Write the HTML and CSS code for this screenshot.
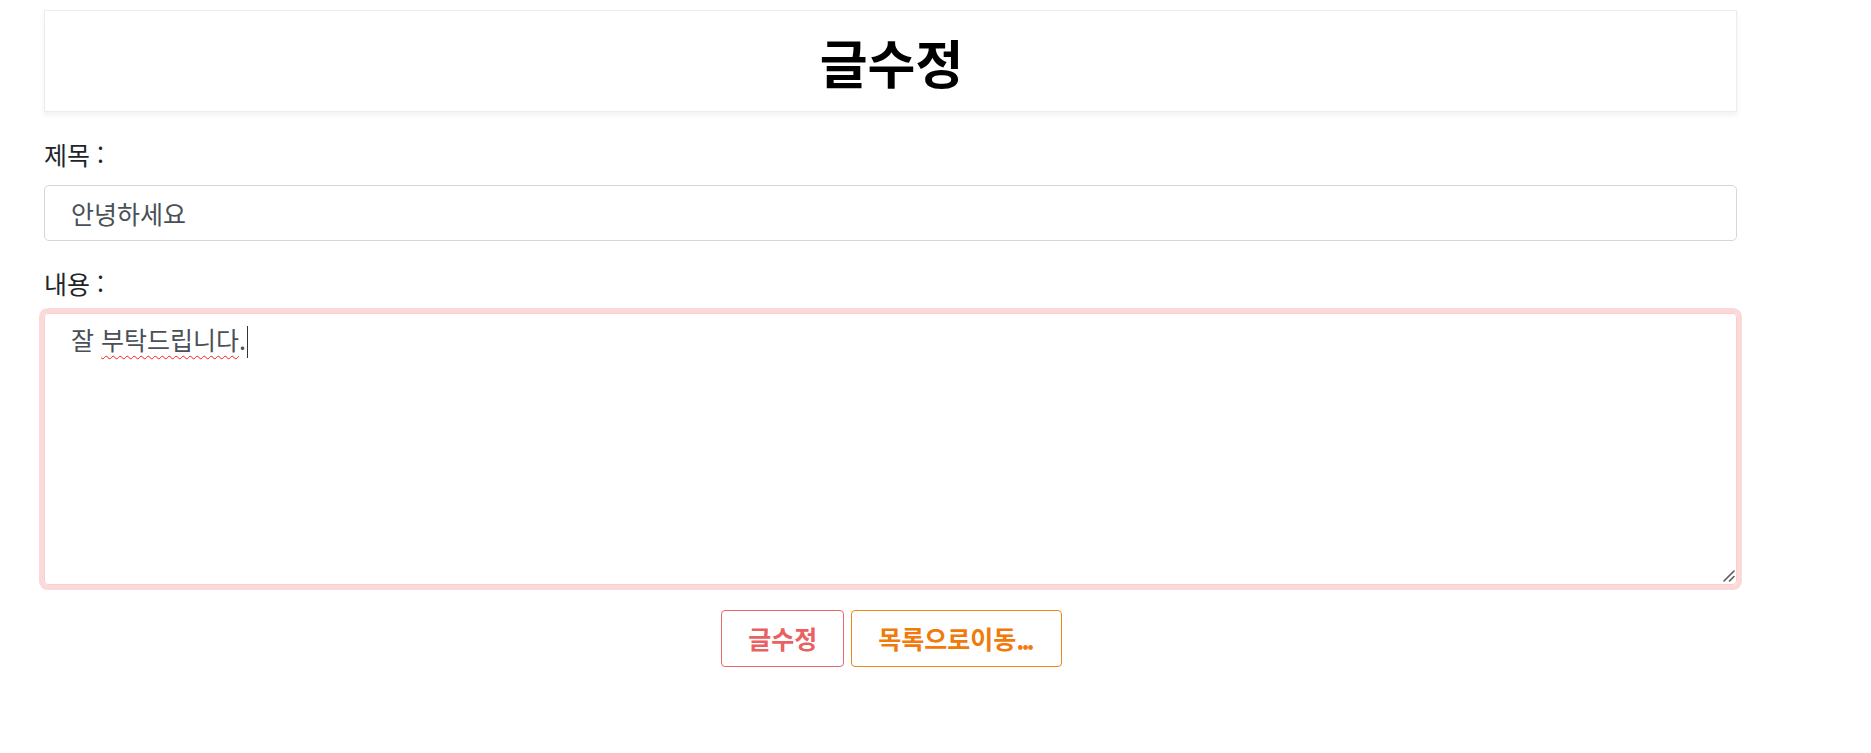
FILE: index.html
```html
<!DOCTYPE html>
<html lang="ko">
<head>
<meta charset="utf-8">
<title>글수정</title>
<link rel="stylesheet" href="styles.css">
</head>
<body>
<div class="page">
  <header class="title-card">
    <h1 class="title">글수정</h1>
  </header>
  <form class="edit-form">
    <label class="field-label">제목 :</label>
    <div class="text-input">안녕하세요</div>
    <label class="field-label">내용 :</label>
    <div class="text-area">
      <div class="text-area-content">잘 <span class="misspelled">부탁드립니다</span>.<span class="caret"></span></div>
      <svg class="grip" width="14" height="14" viewBox="0 0 14 14" aria-hidden="true">
        <line x1="13" y1="2" x2="3" y2="12" stroke="#5a5a5a" stroke-width="1.6" stroke-linecap="round"/>
        <line x1="13" y1="7.5" x2="8.5" y2="12" stroke="#5a5a5a" stroke-width="1.6" stroke-linecap="round"/>
      </svg>
    </div>
    <div class="actions">
      <button type="button" class="btn btn-edit">글수정</button>
      <button type="button" class="btn btn-list">목록으로이동<span class="dots">...</span></button>
    </div>
  </form>
</div>
</body>
</html>
```

FILE: styles.css
```css
html, body {
  margin: 0;
  padding: 0;
  background: #ffffff;
}

body {
  font-family: "Noto Sans CJK KR", "Noto Sans", sans-serif;
  color: #212529;
}

.page {
  width: 1693px;
  margin-left: 44px;
  padding-top: 10px;
}

.title-card {
  box-sizing: border-box;
  height: 102px;
  border: 1px solid #ececec;
  box-shadow: 0 3px 5px rgba(0, 0, 0, 0.06);
  background: #fff;
  display: flex;
  align-items: center;
  justify-content: center;
}

.title {
  margin: 0;
  font-size: 52px;
  font-weight: 700;
  line-height: 1;
  color: #000;
  padding-left: 2px;
  padding-top: 2px;
}

.edit-form {
  display: flex;
  flex-direction: column;
}

.field-label {
  display: block;
  margin-top: 26px;
  margin-bottom: 15px;
  font-size: 25px;
  line-height: 32px;
  color: #212529;
}

.text-input {
  box-sizing: border-box;
  height: 56px;
  border: 1px solid #d3d6da;
  border-radius: 5px;
  padding: 0 26px;
  font-size: 25px;
  line-height: 54px;
  color: #495057;
}

.text-area {
  position: relative;
  box-sizing: border-box;
  height: 272px;
  margin-top: -1px;
  border: 1px solid #f7cfd1;
  border-radius: 4px;
  box-shadow: 0 0 0 5px #fcd9d9;
  padding: 8px 26px;
  overflow: hidden;
}

.text-area-content {
  font-size: 25px;
  line-height: 34px;
  color: #495057;
}

.misspelled {
  text-decoration: underline wavy #ff1a1a;
  text-decoration-thickness: 1px;
  text-underline-offset: 5px;
}

.caret {
  display: inline-block;
  width: 1px;
  height: 32px;
  background: #333;
  vertical-align: -8px;
  margin-left: 1px;
}

.grip {
  position: absolute;
  right: 1px;
  bottom: 1px;
}

.actions {
  display: flex;
  justify-content: center;
  gap: 7px;
  margin-top: 25px;
  padding-left: 2px;
}

.btn {
  box-sizing: border-box;
  height: 57px;
  padding: 0 26px;
  background: #fff;
  border: 1px solid;
  border-radius: 4px;
  font-family: "Noto Sans CJK KR", "Noto Sans", sans-serif;
  font-size: 25px;
  font-weight: 700;
  line-height: 55px;
}

.dots {
  letter-spacing: -3px;
  margin-right: 3px;
}

.btn-edit {
  border-color: #e9666c;
  color: #ea6161;
}

.btn-list {
  border-color: #f0851a;
  color: #f07a0a;
}
```
